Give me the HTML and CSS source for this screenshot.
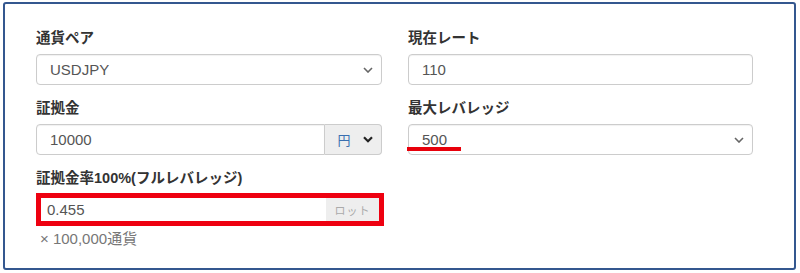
FILE: index.html
```html
<!DOCTYPE html>
<html lang="ja">
<head>
<meta charset="utf-8">
<link rel="stylesheet" href="styles.css">
</head>
<body>
<div class="panel">
  <div class="grid">
    <div class="field">
      <label class="label">通貨ペア</label>
      <div class="control select">
        <span class="val">USDJPY</span>
        <svg class="chev" width="10" height="6" viewBox="0 0 10 6"><path d="M1 1l4 4 4-4" fill="none" stroke="#666" stroke-width="1.6"/></svg>
      </div>
    </div>
    <div class="field">
      <label class="label">現在レート</label>
      <div class="control"><span class="val">110</span></div>
    </div>
    <div class="field">
      <label class="label">証拠金</label>
      <div class="group">
        <div class="control gctl"><span class="val">10000</span></div>
        <div class="addon yen">
          <span>円</span>
          <svg width="10" height="7" viewBox="0 0 10 7"><path d="M1 1.2l4 4 4-4" fill="none" stroke="#222" stroke-width="2.2"/></svg>
        </div>
      </div>
    </div>
    <div class="field">
      <label class="label">最大レバレッジ</label>
      <div class="control select">
        <span class="val">500</span>
        <svg class="chev" width="10" height="6" viewBox="0 0 10 6"><path d="M1 1l4 4 4-4" fill="none" stroke="#666" stroke-width="1.6"/></svg>
        <span class="underline"></span>
      </div>
    </div>
    <div class="field">
      <label class="label">証拠金率100%(フルレバレッジ)</label>
      <div class="redbox">
        <div class="group inner">
          <div class="control gctl"><span class="val">0.455</span></div>
          <div class="addon lot">ロット</div>
        </div>
      </div>
      <div class="help">× 100,000通貨</div>
    </div>
  </div>
</div>
</body>
</html>
```

FILE: styles.css
```css
* { box-sizing: border-box; }
html, body { margin: 0; padding: 0; background: #fff; }
body {
  font-family: "Liberation Sans", "Noto Sans CJK JP", Arial, sans-serif;
  color: #333;
  width: 800px;
  height: 273px;
  padding: 2px 4px 3px 3px;
}
.panel {
  height: 268px;
  border: 2px solid #34578f;
  border-radius: 3px;
  padding: 24px 40px 0 31px;
}
.grid {
  display: grid;
  grid-template-columns: 346px 345px;
  column-gap: 26px;
  row-gap: 13px;
}
.field { display: flex; flex-direction: column; }
.label {
  font-weight: bold;
  font-size: 14.5px;
  line-height: 20px;
  height: 20px;
  margin-bottom: 6px;
  color: #333;
}
.control {
  position: relative;
  height: 31px;
  border: 1px solid #ccc;
  border-radius: 4px;
  display: flex;
  align-items: center;
  padding: 0 13px;
  font-size: 15px;
  color: #555;
  background: #fff;
  box-shadow: inset 0 1px 1px rgba(0,0,0,0.06);
}
.select { justify-content: space-between; }
.chev { margin-right: -5px; }
.underline {
  position: absolute;
  left: -2px;
  top: 22px;
  width: 54px;
  height: 4px;
  background: #e8000b;
}
.group { display: flex; height: 31px; }
.gctl { flex: 1; border-radius: 4px 0 0 4px; }
.addon {
  display: flex;
  align-items: center;
  justify-content: center;
  background: #eee;
  border: 1px solid #ccc;
  border-left: none;
  border-radius: 0 4px 4px 0;
}
.yen {
  width: 57px;
  gap: 12px;
  font-size: 13px;
  color: #3a6fb0;
  padding-left: 4px;
}
.redbox {
  border: 5px solid #ee0010;
  height: 33px;
  overflow: hidden;
  margin-top: -1px;
  margin-right: -2px;
}
.inner { height: 23px; }
.inner .control {
  height: 23px;
  border: none;
  border-radius: 0;
  padding-left: 6px;
  box-shadow: none;
}
.lot {
  width: 53px;
  border: none;
  border-radius: 0;
  font-size: 11px;
  color: #aaa;
  letter-spacing: 1px;
}
.help {
  margin-top: 1px;
  padding-left: 4px;
  font-size: 15px;
  color: #777;
}
```
